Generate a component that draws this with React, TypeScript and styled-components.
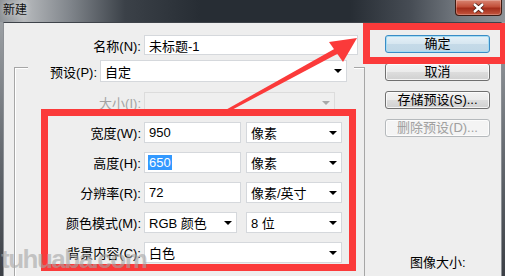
import styled, { createGlobalStyle } from 'styled-components';

const GlobalStyle = createGlobalStyle`
  html, body { margin: 0; padding: 0; }
  body {
    font-family: "Liberation Sans", "Noto Sans CJK SC", sans-serif;
    font-size: 13px;
    color: #000;
  }
`;

const Window = styled.div`
  position: relative;
  width: 505px;
  height: 276px;
  overflow: hidden;
  display: flex;
  flex-direction: column;
  background: linear-gradient(#a4a8ac, #666b71 55%, #3c4046);
`;

const TitleBar = styled.div`
  height: 22px;
  flex: none;
  display: flex;
  justify-content: space-between;
  align-items: flex-start;
  padding-left: 3px;
  background: linear-gradient(
    90deg,
    #8e9297 0px,
    #b6b9bc 24px,
    #80858b 70px,
    #3b4148 125px,
    #272d34 200px,
    #272d34 350px,
    #464c54 410px,
    #747a81 460px,
    #8e9398 505px
  );
`;

const Title = styled.span`
  margin-top: 3px;
  font-size: 12px;
  line-height: 15px;
  color: #111;
  text-shadow: 0 0 6px rgba(255, 255, 255, 0.7);
`;

const CloseButton = styled.div`
  box-sizing: border-box;
  width: 47px;
  height: 16px;
  margin-right: 3px;
  border: 1px solid #3d1a12;
  border-top: none;
  border-radius: 0 0 4px 4px;
  background: linear-gradient(#d98572, #c24f39 45%, #a42d1a 55%, #c4573f);
  box-shadow: inset 0 0 0 1px rgba(255, 255, 255, 0.25);
  display: flex;
  align-items: center;
  justify-content: center;
`;

const Panel = styled.div`
  flex: 1;
  min-height: 0;
  display: flex;
  margin: 0 3px;
  background: #eeeeee;
  border-top: 1px solid #3e434a;
  border-left: 1px solid #8c9095;
  border-right: 1px solid #8c9095;
`;

const LeftPane = styled.div`
  flex: none;
  width: 361px;
  display: flex;
  flex-direction: column;
`;

const Row = styled.div<{ $top?: number }>`
  display: flex;
  align-items: center;
  margin-top: ${p => p.$top ?? 9}px;
`;

const NameRow = styled(Row)`
  margin-top: 12px;
`;

const Label = styled.span<{ $w: number; $disabled?: boolean }>`
  box-sizing: border-box;
  flex: none;
  width: ${p => p.$w}px;
  padding-right: 3px;
  text-align: right;
  white-space: nowrap;
  color: ${p => (p.$disabled ? '#a3a3a3' : '#000')};
`;

const Field = styled.div<{ $w: number; $h?: number; $disabled?: boolean }>`
  box-sizing: border-box;
  flex: none;
  width: ${p => p.$w}px;
  height: ${p => p.$h ?? 21}px;
  padding: 0 4px 0 4px;
  display: flex;
  align-items: center;
  justify-content: space-between;
  background: ${p => (p.$disabled ? '#efefef' : '#fff')};
  border: 1px solid ${p => (p.$disabled ? '#dcdcdc' : '#d5d8dc')};
  white-space: nowrap;
`;

const Caret = styled.span<{ $disabled?: boolean }>`
  flex: none;
  width: 0;
  height: 0;
  border-left: 4px solid transparent;
  border-right: 4px solid transparent;
  border-top: 4px solid ${p => (p.$disabled ? '#a8a8a8' : '#000')};
`;

const Selected = styled.span`
  background: #3399ff;
  color: #fff;
  padding: 0 1px;
  margin-left: -1px;
`;

const GroupBox = styled.div`
  flex: 1;
  box-sizing: border-box;
  margin: 12px 0 0 10px;
  border: 1px solid #a6a6a6;
  border-bottom: none;
  box-shadow: inset 1px 1px 0 #fff;
  display: flex;
  flex-direction: column;
`;

const PresetRow = styled(Row)`
  margin: -8px 10px 0 13px;
  background: #eeeeee;
`;

const Pair = styled.div<{ $gap?: number }>`
  display: flex;
  gap: ${p => p.$gap ?? 5}px;
`;

const RightPane = styled.div`
  flex: 1;
  display: flex;
  flex-direction: column;
  gap: 10px;
  padding: 12px 0 5px 20px;
`;

const Button = styled.div<{ $default?: boolean; $disabled?: boolean }>`
  box-sizing: border-box;
  width: 105px;
  height: 18px;
  border-radius: 3px;
  text-align: center;
  font-size: 13px;
  line-height: 16px;
  border: 1px solid
    ${p => (p.$default ? '#3a8cc6' : p.$disabled ? '#b5b9bc' : '#707070')};
  color: ${p => (p.$disabled ? '#a0a0a0' : '#000')};
  background: ${p =>
    p.$default
      ? 'linear-gradient(#e6f1f8, #d6e6f0 50%, #c5dae8 51%, #c0d7e6)'
      : p.$disabled
      ? '#f4f4f4'
      : 'linear-gradient(#f3f3f3, #ebebeb 50%, #dddddd 51%, #d0d0d0)'};
  box-shadow: inset 0 0 0 1px
    ${p => (p.$default ? '#a6dcf3' : 'rgba(255, 255, 255, 0.75)')};
`;

const ImageSize = styled.div`
  margin: auto 0 0 25px;
  line-height: 16px;
`;

const Highlight = styled.div`
  position: absolute;
  box-sizing: border-box;
  border: 7px solid #fb3a3a;
  pointer-events: none;
`;

const FieldsHighlight = styled(Highlight)`
  left: 41px;
  top: 109px;
  width: 315px;
  height: 162px;
`;

const ButtonHighlight = styled(Highlight)`
  left: 363px;
  top: 23px;
  width: 144px;
  height: 41px;
`;

const ArrowLayer = styled.svg`
  position: absolute;
  left: 0;
  top: 0;
  width: 505px;
  height: 276px;
  pointer-events: none;
`;

const Watermark = styled.div`
  position: absolute;
  left: 1px;
  bottom: 1px;
  font-family: "Liberation Sans", sans-serif;
  font-weight: bold;
  font-size: 26px;
  letter-spacing: -1.5px;
  color: rgba(165, 165, 165, 0.6);
  pointer-events: none;
`;

export default function App() {
  return (
    <>
      <GlobalStyle />
      <Window>
        <TitleBar>
          <Title>新建</Title>
          <CloseButton>
            <svg width="13" height="10" viewBox="0 0 13 10">
              <path d="M2 1 L11 9 M11 1 L2 9" stroke="#4a1a10" strokeWidth="4" />
              <path d="M2 1 L11 9 M11 1 L2 9" stroke="#fff" strokeWidth="2.4" />
            </svg>
          </CloseButton>
        </TitleBar>
        <Panel>
          <LeftPane>
            <NameRow>
              <Label $w={140}>名称(N):</Label>
              <Field $w={214} $h={20}>未标题-1</Field>
            </NameRow>
            <GroupBox>
              <PresetRow>
                <Label $w={72}>预设(P):</Label>
                <Field $w={247} $h={22}>
                  自定
                  <Caret />
                </Field>
              </PresetRow>
              <Row $top={10}>
                <Label $w={129} $disabled>大小(I):</Label>
                <Field $w={191} $disabled>
                  <span />
                  <Caret $disabled />
                </Field>
              </Row>
              <Row>
                <Label $w={129}>宽度(W):</Label>
                <Pair>
                  <Field $w={97}>950</Field>
                  <Field $w={96}>
                    像素
                    <Caret />
                  </Field>
                </Pair>
              </Row>
              <Row>
                <Label $w={129}>高度(H):</Label>
                <Pair>
                  <Field $w={97}>
                    <Selected>650</Selected>
                  </Field>
                  <Field $w={96}>
                    像素
                    <Caret />
                  </Field>
                </Pair>
              </Row>
              <Row>
                <Label $w={129}>分辨率(R):</Label>
                <Pair>
                  <Field $w={97}>72</Field>
                  <Field $w={96}>
                    像素/英寸
                    <Caret />
                  </Field>
                </Pair>
              </Row>
              <Row>
                <Label $w={129}>颜色模式(M):</Label>
                <Pair $gap={9}>
                  <Field $w={93}>
                    RGB 颜色
                    <Caret />
                  </Field>
                  <Field $w={96}>
                    8 位
                    <Caret />
                  </Field>
                </Pair>
              </Row>
              <Row>
                <Label $w={129}>背景内容(C):</Label>
                <Field $w={198}>
                  白色
                  <Caret />
                </Field>
              </Row>
            </GroupBox>
          </LeftPane>
          <RightPane>
            <Button $default>确定</Button>
            <Button>取消</Button>
            <Button>存储预设(S)...</Button>
            <Button $disabled>删除预设(D)...</Button>
            <ImageSize>图像大小:</ImageSize>
          </RightPane>
        </Panel>
        <FieldsHighlight />
        <ButtonHighlight />
        <ArrowLayer viewBox="0 0 505 276">
          <path d="M222 112 L226 113 L339 53 L336 48 Z" fill="#fb3a3a" />
          <polygon points="357,38 329,42 343,62" fill="#fb3a3a" />
        </ArrowLayer>
        <Watermark>tuhuaba.com</Watermark>
      </Window>
    </>
  );
}
